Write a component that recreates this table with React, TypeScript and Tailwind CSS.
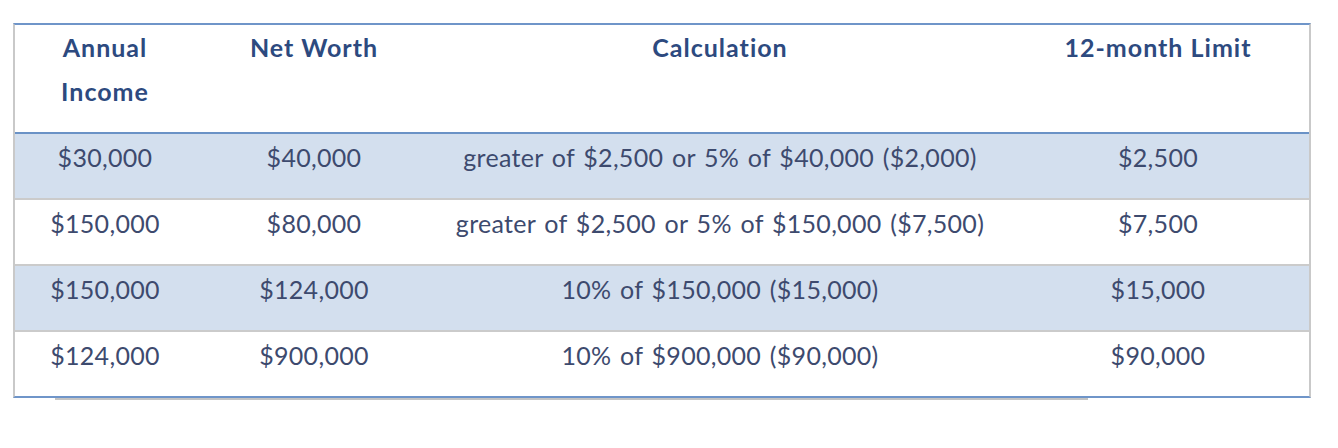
const rows = [
  { income: '$30,000', worth: '$40,000', calc: 'greater of $2,500 or 5% of $40,000 ($2,000)', limit: '$2,500', shaded: true },
  { income: '$150,000', worth: '$80,000', calc: 'greater of $2,500 or 5% of $150,000 ($7,500)', limit: '$7,500', shaded: false },
  { income: '$150,000', worth: '$124,000', calc: '10% of $150,000 ($15,000)', limit: '$15,000', shaded: true },
  { income: '$124,000', worth: '$900,000', calc: '10% of $900,000 ($90,000)', limit: '$90,000', shaded: false },
];

export default function App() {
  return (
    <div className="w-[1338px] h-[448px] bg-white pt-[23px] pl-[13px]" style={{ fontFamily: 'Lato, "Open Sans", sans-serif' }}>
      <div className="w-[1298px] border-x-2 border-x-[#c9c9c9] border-t-2 border-t-[#6f95c9] border-b-2 border-b-[#6f95c9]">
        {/* Header */}
        <div className="grid grid-cols-[180px_238px_574px_302px] h-[109px] border-b-2 border-[#6a92c6] text-[25px] font-bold tracking-[1px] leading-[44px] text-[#2d4a7f] text-center">
          <div className="px-[40px]">Annual Income</div>
          <div>Net Worth</div>
          <div>Calculation</div>
          <div>12-month Limit</div>
        </div>

        {/* Body */}
        {rows.map((r, i) => (
          <div
            key={i}
            className={`grid grid-cols-[180px_238px_574px_302px] text-[25px] tracking-[0.3px] [word-spacing:2px] leading-[44px] text-[#3d4a6e] text-center ${
              r.shaded ? 'bg-[#d3dfee]' : 'bg-white'
            } ${i < rows.length - 1 ? 'h-[66px] border-b-2 border-[#cbcbcb]' : 'h-[64px]'}`}
          >
            <div className="pt-[1px]">{r.income}</div>
            <div className="pt-[1px]">{r.worth}</div>
            <div className="pt-[1px]">{r.calc}</div>
            <div className="pt-[1px]">{r.limit}</div>
          </div>
        ))}
      </div>
      <div className="ml-[42px] w-[1033px] h-[2px] bg-[#c4c4c4]" />
    </div>
  );
}
